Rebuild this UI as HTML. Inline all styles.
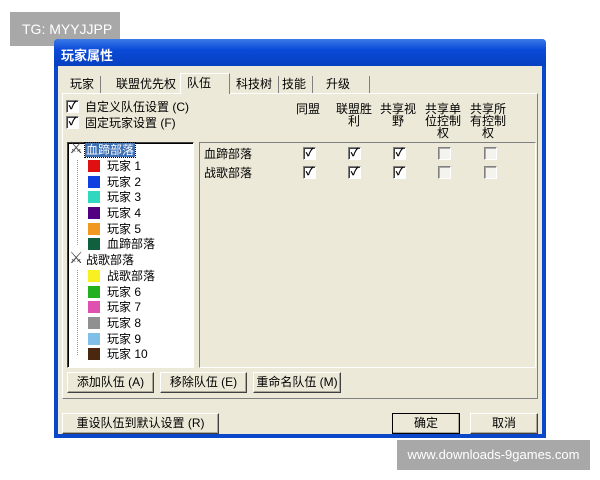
<!DOCTYPE html><html><head><meta charset="utf-8"><style>
*{margin:0;padding:0;box-sizing:border-box}
body{width:600px;height:480px;background:#fff;position:relative;overflow:hidden;font-family:"Liberation Sans","Noto Sans CJK SC","WenQuanYi Zen Hei",sans-serif;font-size:12px;color:#000}
.a{position:absolute}
.btn{position:absolute;background:#ece9d8;border:1px solid;border-color:#fff #404040 #404040 #fff;box-shadow:inset -1px -1px 0 #aca899;text-align:center;line-height:18px;font-size:12px}
.cb{position:absolute;width:13px;height:13px;background:#fff;border:1px solid;border-color:#808080 #fff #fff #808080;box-shadow:inset 1px 1px 0 #404040;font-size:11px;line-height:11px;text-align:center;font-weight:bold}
.cb.off{background:#f4f3ee;box-shadow:inset 1px 1px 0 #aaa}
.sq{position:absolute;left:88px;width:12px;height:12px}
.t{position:absolute;font-size:12px;line-height:14px}
.tab{position:absolute;top:76px;height:17px;line-height:17px;padding:0 6px;border-right:1px solid #808080;font-size:12px}
.hdr{position:absolute;text-align:center;line-height:12px;font-size:12px;width:44px}
</style></head><body>
<div class="a" style="left:10px;top:12px;width:110px;height:34px;background:#a8a8a8;color:#fff;font-size:14px;line-height:34px;padding-left:12px">TG: MYYJJPP</div>
<div class="a" style="left:54px;top:39px;width:492px;height:399px;background:#0b47c9;border-radius:4px 4px 0 0"></div>
<div class="a" style="left:54px;top:39px;width:492px;height:27px;background:linear-gradient(#3a7ae8,#0a4ad8 40%,#0840c0);border-radius:4px 4px 0 0"></div>
<div class="a" style="left:61px;top:45px;color:#fff;font-weight:bold;font-size:13px">玩家属性</div>
<div class="a" style="left:58px;top:66px;width:484px;height:368px;background:#ece9d8"></div>
<div class="a" style="left:62px;top:93px;width:476px;height:306px;border:1px solid;border-color:#fff #808080 #808080 #fff"></div>
<div class="tab" style="left:64px">玩家</div>
<div class="tab" style="left:110px">联盟优先权</div>
<div class="a" style="left:180px;top:73px;width:50px;height:21px;background:#ece9d8;border:1px solid;border-color:#fff #808080 transparent #fff;border-bottom:none;line-height:18px;padding-left:6px">队伍</div>
<div class="tab" style="left:230px">科技树</div>
<div class="tab" style="left:276px">技能</div>
<div class="tab" style="left:320px;width:50px">升级</div>
<div class="cb" style="left:66px;top:100px">✓</div><div class="t" style="left:85px;top:100px">自定义队伍设置 (C)</div>
<div class="cb" style="left:66px;top:116px">✓</div><div class="t" style="left:85px;top:116px">固定玩家设置 (F)</div>
<div class="hdr" style="left:286px;top:103px">同盟</div>
<div class="hdr" style="left:332px;top:103px">联盟胜<br>利</div>
<div class="hdr" style="left:376px;top:103px">共享视<br>野</div>
<div class="hdr" style="left:421px;top:103px">共享单<br>位控制<br>权</div>
<div class="hdr" style="left:466px;top:103px">共享所<br>有控制<br>权</div>
<div class="a" style="left:67px;top:142px;width:127px;height:226px;background:#fff;border:1px solid;border-color:#404040 #fff #fff #404040;box-shadow:inset 1px 1px 0 #000"></div>
<div class="a" style="left:77px;top:160px;height:85px;border-left:1px dotted #999"></div>
<div class="a" style="left:77px;top:270px;height:85px;border-left:1px dotted #999"></div>
<div class="t" style="left:69px;top:142px;font-size:16px;color:#444">⚔</div>
<div class="t" style="left:85px;top:143px;background:#3b6eb5;color:#fff;padding:0 1px;outline:1px dotted #000">血蹄部落</div>
<div class="t" style="left:69px;top:252px;font-size:16px;color:#444">⚔</div>
<div class="t" style="left:86px;top:253px">战歌部落</div>
<div class="sq" style="top:160px;background:#e01010"></div><div class="t" style="left:107px;top:159px">玩家 1</div>
<div class="sq" style="top:176px;background:#1040e0"></div><div class="t" style="left:107px;top:175px">玩家 2</div>
<div class="sq" style="top:191px;background:#30d8c0"></div><div class="t" style="left:107px;top:190px">玩家 3</div>
<div class="sq" style="top:207px;background:#500080"></div><div class="t" style="left:107px;top:206px">玩家 4</div>
<div class="sq" style="top:223px;background:#f09820"></div><div class="t" style="left:107px;top:222px">玩家 5</div>
<div class="sq" style="top:238px;background:#106040"></div><div class="t" style="left:107px;top:237px">血蹄部落</div>
<div class="sq" style="top:270px;background:#f8f020"></div><div class="t" style="left:107px;top:269px">战歌部落</div>
<div class="sq" style="top:286px;background:#20b020"></div><div class="t" style="left:107px;top:285px">玩家 6</div>
<div class="sq" style="top:301px;background:#e050b0"></div><div class="t" style="left:107px;top:300px">玩家 7</div>
<div class="sq" style="top:317px;background:#909090"></div><div class="t" style="left:107px;top:316px">玩家 8</div>
<div class="sq" style="top:333px;background:#80c0e8"></div><div class="t" style="left:107px;top:332px">玩家 9</div>
<div class="sq" style="top:348px;background:#4a2810"></div><div class="t" style="left:107px;top:347px">玩家 10</div>
<div class="a" style="left:199px;top:142px;width:337px;height:226px;border:1px solid;border-color:#808080 #fff #fff #808080"></div>
<div class="t" style="left:204px;top:147px">血蹄部落</div>
<div class="t" style="left:204px;top:166px">战歌部落</div>
<div class="cb" style="left:303px;top:147px">✓</div><div class="cb" style="left:348px;top:147px">✓</div><div class="cb" style="left:393px;top:147px">✓</div><div class="cb off" style="left:438px;top:147px"></div><div class="cb off" style="left:484px;top:147px"></div>
<div class="cb" style="left:303px;top:166px">✓</div><div class="cb" style="left:348px;top:166px">✓</div><div class="cb" style="left:393px;top:166px">✓</div><div class="cb off" style="left:438px;top:166px"></div><div class="cb off" style="left:484px;top:166px"></div>
<div class="btn" style="left:67px;top:372px;width:87px;height:21px">添加队伍 (A)</div>
<div class="btn" style="left:160px;top:372px;width:87px;height:21px">移除队伍 (E)</div>
<div class="btn" style="left:253px;top:372px;width:88px;height:21px">重命名队伍 (M)</div>
<div class="btn" style="left:62px;top:413px;width:157px;height:21px">重设队伍到默认设置 (R)</div>
<div class="btn" style="left:392px;top:413px;width:68px;height:21px;border:1px solid #000">确定</div>
<div class="btn" style="left:470px;top:413px;width:68px;height:21px">取消</div>
<div class="a" style="left:397px;top:440px;width:193px;height:30px;background:#a8a8a8;color:#fff;font-size:13px;line-height:30px;text-align:center">www.downloads-9games.com</div>
</body></html>
